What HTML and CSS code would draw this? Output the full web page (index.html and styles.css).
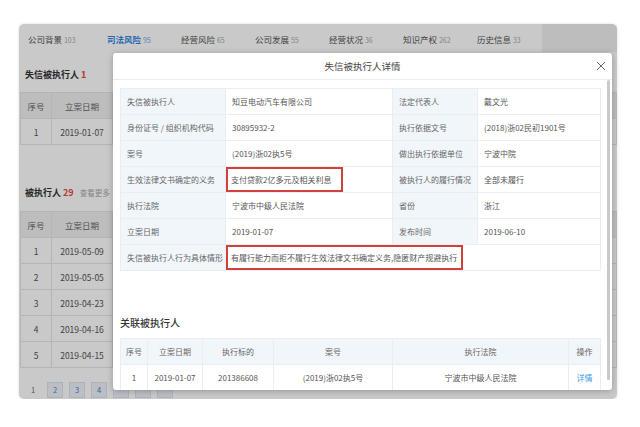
FILE: index.html
```html
<!DOCTYPE html>
<html lang="zh-CN">
<head>
    <meta charset="UTF-8">
    <meta name="viewport" content="width=device-width, initial-scale=1.0">
    <title>失信被执行人详情</title>
    <link rel="stylesheet" href="styles.css">
</head>
<body>

    <div class="frame">

        <div class="page">
            <nav class="tabs">
                <div class="tab">公司背景 <span class="cnt">103</span></div>
                <div class="tab active">司法风险 <span class="cnt">95</span></div>
                <div class="tab">经营风险 <span class="cnt">65</span></div>
                <div class="tab">公司发展 <span class="cnt">55</span></div>
                <div class="tab">经营状况 <span class="cnt">36</span></div>
                <div class="tab">知识产权 <span class="cnt">262</span></div>
                <div class="tab">历史信息 <span class="cnt">33</span></div>
            </nav>

            <div class="content">
                <h3 class="sec-title">失信被执行人 <span class="num">1</span></h3>
                <table class="grid">
                    <tr><th class="c1">序号</th><th class="c2">立案日期</th><th></th><th></th><th></th></tr>
                    <tr><td>1</td><td>2019-01-07</td><td></td><td></td><td></td></tr>
                </table>

                <h3 class="sec-title second">被执行人 <span class="num">29</span> <span class="more">查看更多</span></h3>
                <table class="grid">
                    <tr><th class="c1">序号</th><th class="c2">立案日期</th><th></th><th></th><th></th></tr>
                    <tr><td>1</td><td>2019-05-09</td><td></td><td></td><td></td></tr>
                    <tr><td>2</td><td>2019-05-05</td><td></td><td></td><td></td></tr>
                    <tr><td>3</td><td>2019-04-23</td><td></td><td></td><td></td></tr>
                    <tr><td>4</td><td>2019-04-16</td><td></td><td></td><td></td></tr>
                    <tr><td>5</td><td>2019-04-15</td><td></td><td></td><td></td></tr>
                </table>

                <div class="pager">
                    <span class="pg cur">1</span>
                    <span class="pg">2</span>
                    <span class="pg">3</span>
                    <span class="pg">4</span>
                    <span class="pg"></span>
                    <span class="pg"></span>
                    <span class="pg"></span>
                </div>
            </div>
        </div>

        <div class="mask"></div>

        <div class="modal">
            <div class="modal-head">
                失信被执行人详情
                <svg class="close" width="10" height="10" viewBox="0 0 10 10"><path d="M1 1L9 9M9 1L1 9" stroke="#666" stroke-width="1"/></svg>
            </div>
            <div class="modal-body">
                <table class="info">
                    <colgroup><col class="w1"><col class="w2"><col class="w3"><col class="w4"></colgroup>
                    <tr><td class="k">失信被执行人</td><td>知豆电动汽车有限公司</td><td class="k">法定代表人</td><td>戴文光</td></tr>
                    <tr><td class="k">身份证号 / 组织机构代码</td><td>30895932-2</td><td class="k">执行依据文号</td><td>(2018)浙02民初1901号</td></tr>
                    <tr><td class="k">案号</td><td>(2019)浙02执5号</td><td class="k">做出执行依据单位</td><td>宁波中院</td></tr>
                    <tr><td class="k">生效法律文书确定的义务</td><td class="hl"><span class="mark m1">支付贷款2亿多元及相关利息</span></td><td class="k">被执行人的履行情况</td><td>全部未履行</td></tr>
                    <tr><td class="k">执行法院</td><td>宁波市中级人民法院</td><td class="k">省份</td><td>浙江</td></tr>
                    <tr><td class="k">立案日期</td><td>2019-01-07</td><td class="k">发布时间</td><td>2019-06-10</td></tr>
                    <tr><td class="k">失信被执行人行为具体情形</td><td class="hl" colspan="3"><span class="mark">有履行能力而拒不履行生效法律文书确定义务,隐匿财产规避执行</span></td></tr>
                </table>

                <h4 class="rel-title">关联被执行人</h4>
                <table class="rel">
                    <colgroup><col class="r1"><col class="r2"><col class="r3"><col class="r4"><col class="r5"><col class="r6"></colgroup>
                    <tr><th>序号</th><th>立案日期</th><th>执行标的</th><th>案号</th><th>执行法院</th><th>操作</th></tr>
                    <tr><td>1</td><td>2019-01-07</td><td>201386608</td><td>(2019)浙02执5号</td><td>宁波市中级人民法院</td><td class="link">详情</td></tr>
                </table>

                <div class="scrollbar"></div>
            </div>
        </div>

    </div>

</body>
</html>
```

FILE: styles.css
```css
body {
    margin: 0;
    background: #ffffff;
    font-family: "Noto Sans CJK SC", "Liberation Sans", sans-serif;
    color: #555555;
}

.frame {
    position: relative;
    width: 598px;
    height: 375px;
    margin: 24px 0 0 19px;
    border-radius: 5px;
    overflow: hidden;
    background: #ffffff;
    box-shadow: 0px 0px 3px rgba(0,0,0,.15);
}

/* background page */

.tabs {
    display: flex;
    height: 28px;
    background: #f0f0f0;
}

.tab {
    width: 74px;
    padding-left: 9px;
    box-sizing: border-box;
    background: #ffffff;
    font-size: 8.5px;
    line-height: 31px;
    color: #555555;
}

.tab:first-child {
    width: 79px;
}

.tab .cnt {
    font-size: 7px;
    color: #aaaaaa;
}

.tab.active {
    font-weight: bold;
    color: #2f86e0;
}

.tab.active .cnt {
    font-weight: normal;
    color: #6aa8e8;
}

.content {
    padding: 16px 0 0 1px;
}

.sec-title {
    margin: 0 0 10px 5px;
    font-size: 9px;
    line-height: 14px;
    font-weight: bold;
    color: #333333;
}

.sec-title.second {
    margin-top: 41px;
    margin-bottom: 11px;
}

.sec-title .num {
    color: #e04a3f;
}

.sec-title .more {
    margin-left: 4px;
    font-size: 7.5px;
    font-weight: normal;
    color: #aaaaaa;
}

.grid {
    width: 597px;
    border-collapse: collapse;
    font-size: 8.5px;
    color: #555555;
}

.grid th, .grid td {
    height: 25px;
    padding: 0;
    border: 1px solid #e6e6e6;
    text-align: center;
    font-weight: normal;
}

.grid th {
    background: #f0f0f0;
    color: #666666;
}

.grid .c1 { width: 30px; }
.grid .c2 { width: 60px; }

.pager {
    display: flex;
    gap: 6px;
    margin: 14px 0 0 5px;
}

.pg {
    width: 16px;
    height: 16px;
    box-sizing: border-box;
    border: 1px solid #dde4ee;
    background: #eef3fa;
    font-size: 7.5px;
    line-height: 14px;
    text-align: center;
    color: #4a7fc0;
}

.pg.cur {
    border-color: transparent;
    background: none;
    color: #666666;
}

.mask {
    position: absolute;
    top: 0;
    left: 0;
    right: 0;
    bottom: 0;
    background: rgba(0,0,0,.21);
}

/* modal */

.modal {
    position: absolute;
    left: 94px;
    top: 29px;
    width: 499px;
    height: 337px;
    display: flex;
    flex-direction: column;
    background: #ffffff;
    border-radius: 3px;
    box-shadow: 0px 1px 6px rgba(0,0,0,.25);
    overflow: hidden;
}

.modal-head {
    position: relative;
    height: 26px;
    border-bottom: 1px solid #ececec;
    text-align: center;
    font-size: 9.5px;
    line-height: 26px;
    color: #444444;
}

.close {
    position: absolute;
    right: 6px;
    top: 8px;
}

.modal-body {
    position: relative;
    flex: 1;
    overflow: hidden;
    padding: 8px 12px 0 7px;
}

.info {
    width: 480px;
    table-layout: fixed;
    border-collapse: collapse;
    font-size: 8px;
    color: #555555;
}

.info .w1 { width: 105px; }
.info .w2 { width: 167px; }
.info .w3 { width: 85px; }
.info .w4 { width: 123px; }

.info td {
    height: 25px;
    padding: 0 0 0 6px;
    border: 1px solid #e9eef4;
    white-space: nowrap;
}

.info td.k {
    background: #f1f6fb;
    color: #666666;
}

.info td.hl {
    padding: 0;
}

.mark {
    display: inline-block;
    vertical-align: top;
    height: 25px;
    box-sizing: border-box;
    padding: 0 4px 0 3px;
    border: 2px solid #d2403a;
    line-height: 21px;
}

.mark.m1 {
    padding-right: 10px;
}

.rel-title {
    margin: 44px 0 7px;
    font-size: 10px;
    line-height: 16px;
    font-weight: 500;
    color: #333333;
}

.rel {
    width: 480px;
    table-layout: fixed;
    border-collapse: collapse;
    font-size: 8px;
    color: #555555;
}

.rel .r1 { width: 27px; }
.rel .r2 { width: 55px; }
.rel .r3 { width: 71px; }
.rel .r4 { width: 119px; }
.rel .r5 { width: 176px; }
.rel .r6 { width: 32px; }

.rel th, .rel td {
    height: 25px;
    padding: 0;
    border: 1px solid #e9eef4;
    text-align: center;
    font-weight: normal;
}

.rel th {
    background: #f1f6fb;
    color: #666666;
}

.rel td.link {
    color: #3d9be0;
}

.scrollbar {
    position: absolute;
    right: 2px;
    top: 0;
    bottom: 10px;
    width: 3px;
    border-radius: 2px;
    background: #c9c9c9;
}
```
